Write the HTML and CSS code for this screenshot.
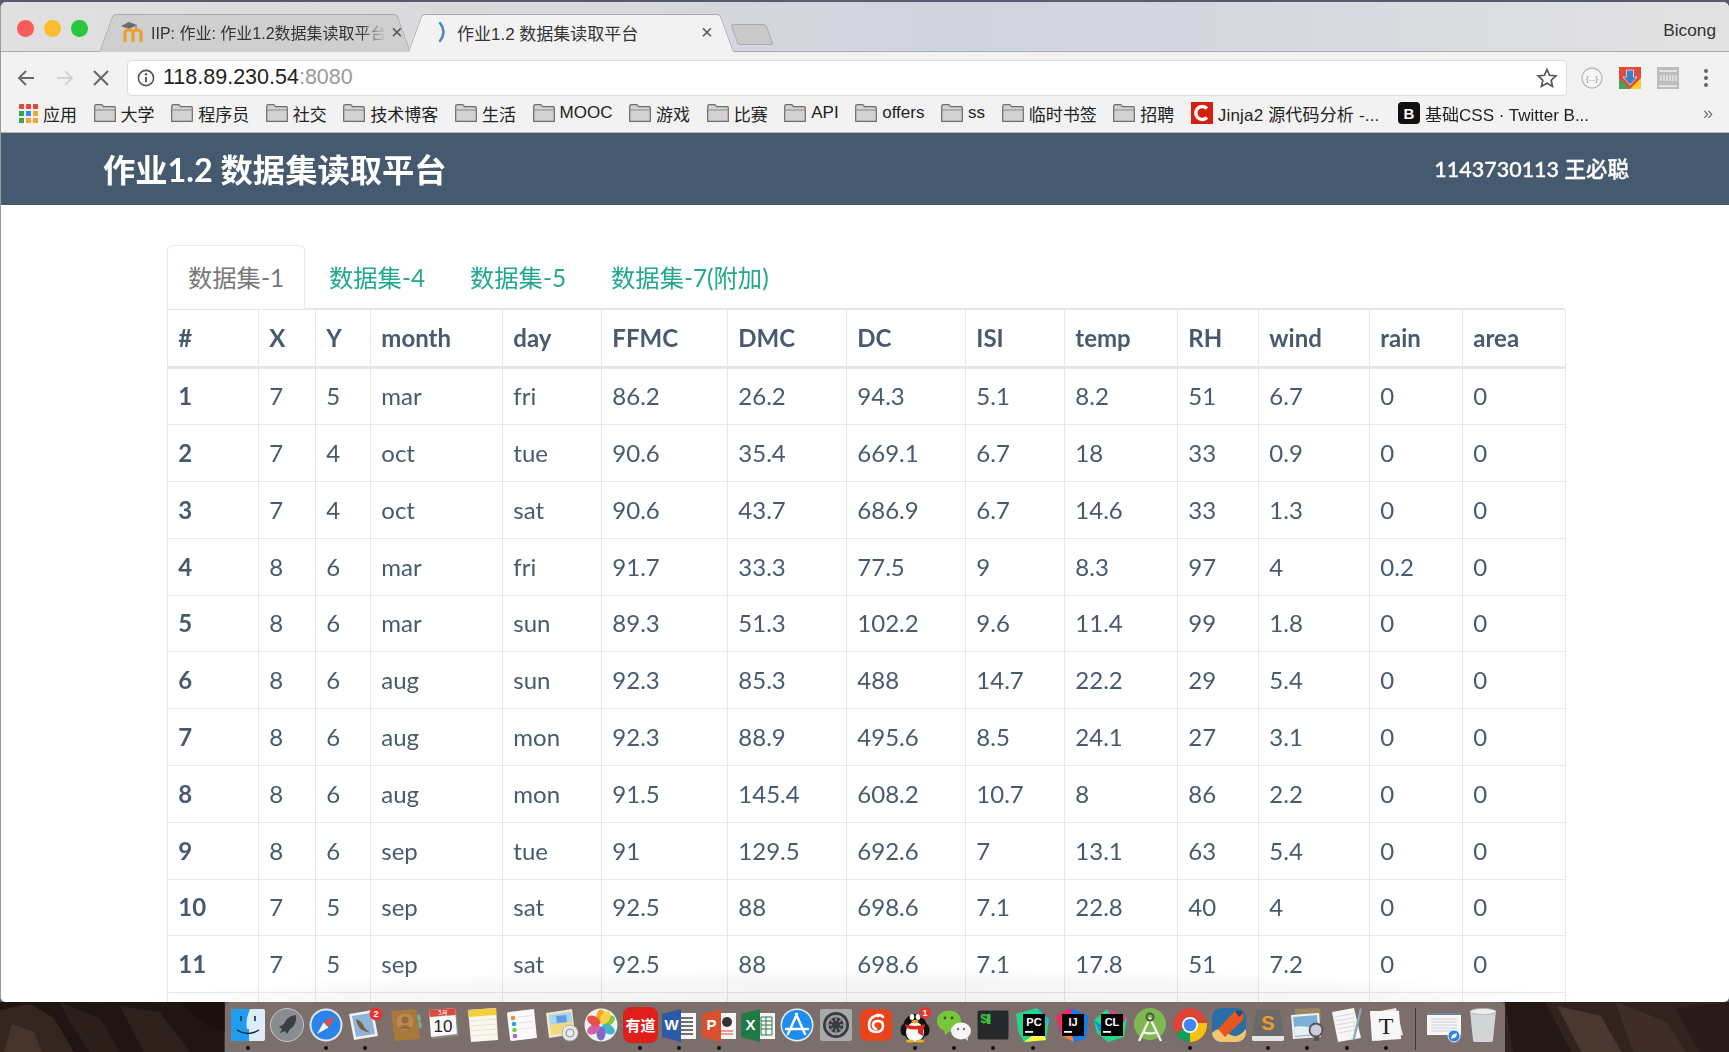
FILE: index.html
```html
<!DOCTYPE html>
<html lang="zh-CN">
<head>
<meta charset="utf-8">
<title>作业1.2 数据集读取平台</title>
<link rel="stylesheet" href="styles.css">
</head>
<body>
<div class="window">
  <div class="tabstrip">
    <div class="lights"><span class="light red"></span><span class="light yellow"></span><span class="light green"></span></div>
    <div class="tab inactive">
      <div class="tab-in">
        <svg class="fav" viewBox="0 0 24 22" width="24" height="22"><path d="M1 5l8-4 8 3-8 4z" fill="#6a6a6a"/><path d="M16 4v6" stroke="#6a6a6a" stroke-width="1"/><path d="M5 21V12q0-3 4-3t4 3v9M13 12q0-3 4-3t4 3v9" fill="none" stroke="#eda02e" stroke-width="3.200"/></svg>
        <span class="tab-title fade">IIP: 作业: 作业1.2数据集读取平台</span>
        <span class="tab-x">×</span>
      </div>
    </div>
    <div class="tab active">
      <div class="tab-in">
        <svg class="spin" viewBox="0 0 12 22" width="12" height="22"><path d="M3 2q7 9 0 18" fill="none" stroke="#3f83d6" stroke-width="2.400" stroke-linecap="round"/></svg>
        <span class="tab-title">作业1.2 数据集读取平台</span>
        <span class="tab-x">×</span>
      </div>
    </div>
    <div class="newtab"></div>
    <div class="profile">Bicong</div>
  </div>

  <div class="toolbar">
    <svg class="nav-ic" viewBox="0 0 20 20" width="20" height="20"><path d="M18 10H3M10 3l-7 7 7 7" fill="none" stroke="#666" stroke-width="1.900"/></svg>
    <svg class="nav-ic" viewBox="0 0 20 20" width="20" height="20"><path d="M2 10h15M10 3l7 7-7 7" fill="none" stroke="#d2d2d2" stroke-width="1.900"/></svg>
    <svg class="nav-ic stop" viewBox="0 0 20 20" width="20" height="20"><path d="M3 3l14 14M17 3L3 17" fill="none" stroke="#666" stroke-width="2"/></svg>
    <div class="omnibox">
      <svg viewBox="0 0 18 18" width="18" height="18"><circle cx="9" cy="9" r="7.600" fill="none" stroke="#555" stroke-width="1.600"/><path d="M9 8v5.200" stroke="#555" stroke-width="1.900"/><circle cx="9" cy="5.200" r="1.200" fill="#555"/></svg>
      <span class="url">118.89.230.54<span class="port">:8080</span></span>
      <svg class="star" viewBox="0 0 22 22" width="22" height="22"><path d="M11 2.500l2.600 5.800 6.300.7-4.700 4.200 1.300 6.200-5.500-3.200-5.500 3.200 1.300-6.200L2.100 9l6.300-.7z" fill="none" stroke="#555" stroke-width="1.700"/></svg>
    </div>
    <div class="exts">
      <svg viewBox="0 0 24 24" width="24" height="24"><circle cx="12" cy="12" r="10" fill="#f6f6f6" stroke="#bbb" stroke-width="1.300"/><text x="12" y="15" class="ext-t">{...}</text></svg>
      <svg viewBox="0 0 24 24" width="24" height="24"><rect x="1" y="1" width="22" height="22" fill="#e5483c"/><path d="M1 12l11 11H1z" fill="#43a656"/><path d="M23 12L12 23h11z" fill="#f8cf2c"/><path d="M8.500 4h7v7h3.500l-7 8-7-8h3.500z" fill="#3d7fc4" stroke="#dce6f2" stroke-width=".8"/></svg>
      <svg viewBox="0 0 24 24" width="24" height="24"><rect x="1" y="1" width="22" height="22" fill="#bdbdbd"/><path d="M3 5h18M3 20h18" stroke="#eee" stroke-width="1.400"/><path d="M5 9v6M8 9v6M11 9v6M14 9v6M17 9v6M20 9v6" stroke="#f0f0f0" stroke-width="1.200"/></svg>
      <svg viewBox="0 0 24 24" width="24" height="24"><circle cx="12" cy="5" r="2" fill="#666"/><circle cx="12" cy="12" r="2" fill="#666"/><circle cx="12" cy="19" r="2" fill="#666"/></svg>
    </div>
  </div>

  <div class="bookmarks">
    <div class="bm">
      <svg viewBox="0 0 19 19" width="19" height="19"><g><rect x="0" y="0" width="5" height="5" fill="#e04a3f"/><rect x="7" y="0" width="5" height="5" fill="#e04a3f"/><rect x="14" y="0" width="5" height="5" fill="#e04a3f"/><rect x="0" y="7" width="5" height="5" fill="#34a853"/><rect x="7" y="7" width="5" height="5" fill="#4285f4"/><rect x="14" y="7" width="5" height="5" fill="#f0a830"/><rect x="0" y="14" width="5" height="5" fill="#34a853"/><rect x="7" y="14" width="5" height="5" fill="#f0a830"/><rect x="14" y="14" width="5" height="5" fill="#f0a830"/></g></svg>
      <span>应用</span>
    </div>
    <div class="bm"><svg class="folder"><use href="#folder"/></svg><span>大学</span></div>
    <div class="bm"><svg class="folder"><use href="#folder"/></svg><span>程序员</span></div>
    <div class="bm"><svg class="folder"><use href="#folder"/></svg><span>社交</span></div>
    <div class="bm"><svg class="folder"><use href="#folder"/></svg><span>技术博客</span></div>
    <div class="bm"><svg class="folder"><use href="#folder"/></svg><span>生活</span></div>
    <div class="bm"><svg class="folder"><use href="#folder"/></svg><span>MOOC</span></div>
    <div class="bm"><svg class="folder"><use href="#folder"/></svg><span>游戏</span></div>
    <div class="bm"><svg class="folder"><use href="#folder"/></svg><span>比赛</span></div>
    <div class="bm"><svg class="folder"><use href="#folder"/></svg><span>API</span></div>
    <div class="bm"><svg class="folder"><use href="#folder"/></svg><span>offers</span></div>
    <div class="bm"><svg class="folder"><use href="#folder"/></svg><span>ss</span></div>
    <div class="bm"><svg class="folder"><use href="#folder"/></svg><span>临时书签</span></div>
    <div class="bm"><svg class="folder"><use href="#folder"/></svg><span>招聘</span></div>
    <div class="bm bm-jinja"><svg viewBox="0 0 22 22" width="22" height="22"><rect width="22" height="22" fill="#d3200f"/><path d="M16 6.500A6.500 6.500 0 1 0 16 15.500" fill="none" stroke="#fff" stroke-width="3.400"/></svg><span>Jinja2 源代码分析 -...</span></div>
    <div class="bm bm-css"><svg viewBox="0 0 22 22" width="22" height="22"><rect width="22" height="22" rx="4" fill="#111"/><text x="11" y="16.500" class="bm-b">B</text></svg><span>基础CSS · Twitter B...</span></div>
    <div class="more">»</div>
    <svg class="defs"><defs><g id="folder"><path d="M.7 18.300V3.200q0-1.500 1.500-1.500h5q1 0 1.500 1l.8 1h10.800q1 0 1 1v13.600z" fill="#d2d2d2" stroke="#6c6c6c" stroke-width="1.200"/><path d="M1 7h20" stroke="#8a8a8a" stroke-width="1"/></g></defs></svg>
  </div>

  <header class="site-head">
    <div class="site-title">作业1.2 数据集读取平台</div>
    <div class="site-user">1143730113 王必聪</div>
  </header>

  <main class="page">
    <ul class="nav-tabs">
      <li class="nt current">数据集-1</li>
      <li class="nt">数据集-4</li>
      <li class="nt">数据集-5</li>
      <li class="nt">数据集-7(附加)</li>
    </ul>
    <table class="data">
      <colgroup><col class="c1"><col class="c2"><col class="c3"><col class="c4"><col class="c5"><col class="c6"><col class="c7"><col class="c8"><col class="c9"><col class="c10"><col class="c11"><col class="c12"><col class="c13"><col class="c14"></colgroup>
      <thead><tr><th>#</th><th>X</th><th>Y</th><th>month</th><th>day</th><th>FFMC</th><th>DMC</th><th>DC</th><th>ISI</th><th>temp</th><th>RH</th><th>wind</th><th>rain</th><th>area</th></tr></thead>
      <tbody>
        <tr><th>1</th><td>7</td><td>5</td><td>mar</td><td>fri</td><td>86.2</td><td>26.2</td><td>94.3</td><td>5.1</td><td>8.2</td><td>51</td><td>6.7</td><td>0</td><td>0</td></tr>
        <tr><th>2</th><td>7</td><td>4</td><td>oct</td><td>tue</td><td>90.6</td><td>35.4</td><td>669.1</td><td>6.7</td><td>18</td><td>33</td><td>0.9</td><td>0</td><td>0</td></tr>
        <tr><th>3</th><td>7</td><td>4</td><td>oct</td><td>sat</td><td>90.6</td><td>43.7</td><td>686.9</td><td>6.7</td><td>14.6</td><td>33</td><td>1.3</td><td>0</td><td>0</td></tr>
        <tr><th>4</th><td>8</td><td>6</td><td>mar</td><td>fri</td><td>91.7</td><td>33.3</td><td>77.5</td><td>9</td><td>8.3</td><td>97</td><td>4</td><td>0.2</td><td>0</td></tr>
        <tr><th>5</th><td>8</td><td>6</td><td>mar</td><td>sun</td><td>89.3</td><td>51.3</td><td>102.2</td><td>9.6</td><td>11.4</td><td>99</td><td>1.8</td><td>0</td><td>0</td></tr>
        <tr><th>6</th><td>8</td><td>6</td><td>aug</td><td>sun</td><td>92.3</td><td>85.3</td><td>488</td><td>14.7</td><td>22.2</td><td>29</td><td>5.4</td><td>0</td><td>0</td></tr>
        <tr><th>7</th><td>8</td><td>6</td><td>aug</td><td>mon</td><td>92.3</td><td>88.9</td><td>495.6</td><td>8.5</td><td>24.1</td><td>27</td><td>3.1</td><td>0</td><td>0</td></tr>
        <tr><th>8</th><td>8</td><td>6</td><td>aug</td><td>mon</td><td>91.5</td><td>145.4</td><td>608.2</td><td>10.7</td><td>8</td><td>86</td><td>2.2</td><td>0</td><td>0</td></tr>
        <tr><th>9</th><td>8</td><td>6</td><td>sep</td><td>tue</td><td>91</td><td>129.5</td><td>692.6</td><td>7</td><td>13.1</td><td>63</td><td>5.4</td><td>0</td><td>0</td></tr>
        <tr><th>10</th><td>7</td><td>5</td><td>sep</td><td>sat</td><td>92.5</td><td>88</td><td>698.6</td><td>7.1</td><td>22.8</td><td>40</td><td>4</td><td>0</td><td>0</td></tr>
        <tr><th>11</th><td>7</td><td>5</td><td>sep</td><td>sat</td><td>92.5</td><td>88</td><td>698.6</td><td>7.1</td><td>17.8</td><td>51</td><td>7.2</td><td>0</td><td>0</td></tr>
        <tr><th></th><td></td><td></td><td></td><td></td><td></td><td></td><td></td><td></td><td></td><td></td><td></td><td></td><td></td></tr>
      </tbody>
    </table>
    <div class="dock-shade"></div>
  </main>
</div>

<div class="desktop">
  <svg class="wall" viewBox="0 0 225 50" preserveAspectRatio="none"><rect width="225" height="50" fill="#201512"/><path d="M0 8l30-6 24 14 20 34H0z" fill="#34251f"/><path d="M60 0l40 16 20 34H90L70 20z" fill="#2c1e19"/><path d="M120 4l40 6 30 40h-46z" fill="#2e201b"/><path d="M180 0h45v30l-20-8z" fill="#1a110e"/><path d="M12 22l22 8 8 20H4z" fill="#463329"/></svg>
  <nav class="dock">
    <div class="di"><svg viewBox="0 0 36 36"><rect x="1" y="2" width="34" height="32" rx="2" fill="#dfeafa"/><path d="M3 2h17q-5 12-3 20h2v12H3a2 2 0 0 1-2-2V4a2 2 0 0 1 2-2z" fill="#1f9df0"/><path d="M11 9v5M25 9v5" stroke="#134" stroke-width="1.600"/><path d="M7 23q11 7 22 0" fill="none" stroke="#123" stroke-width="1.400"/></svg><i class="run"></i></div>
    <div class="di"><svg viewBox="0 0 36 36"><circle cx="18" cy="18" r="16.500" fill="#8a8d90"/><circle cx="18" cy="18" r="16.500" fill="none" stroke="#c4c6c8" stroke-width="1"/><path d="M27 8q-9 1-12 9l-5 3 3 2-2 4 5-2 2 3 3-5q7-4 6-14z" fill="#3c3e42"/></svg></div>
    <div class="di"><svg viewBox="0 0 36 36"><circle cx="18" cy="18" r="16.500" fill="#dfe6f0"/><circle cx="18" cy="18" r="14.500" fill="#2a83e6"/><path d="M27 9L15.500 15.500 20.500 20.500z" fill="#ef4a3c"/><path d="M9 27l6.500-11.500 5 5z" fill="#f4f4f4"/></svg><i class="run"></i></div>
    <div class="di"><svg viewBox="0 0 36 36"><path d="M2 7l24-4 5 26-24 4z" fill="#f2f2f0"/><path d="M5 9l19-3 4 21-19 3z" fill="#8db5da"/><path d="M9 12q6 2 8 8l6 6-8-3q-5-4-6-11z" fill="#7a5c3c"/><circle cx="29" cy="7" r="6.500" fill="#e8332e"/><text x="29" y="10" class="badge-t">2</text></svg><i class="run"></i></div>
    <div class="di"><svg viewBox="0 0 36 36"><path d="M4 4l25-2 4 30-25 2z" fill="#a9793c"/><path d="M30 8l3-.5 1 6-3 .5zM31 15l3-.5 1 6-3 .5z" fill="#6bb59a"/><circle cx="18" cy="15" r="8.500" fill="#b98a4e"/><circle cx="18" cy="13" r="3.500" fill="#96693a"/><path d="M12 21q6-6 12 0v1H12z" fill="#96693a"/></svg></div>
    <div class="di"><svg viewBox="0 0 36 36"><path d="M3 4l27-2 3 27-27 3z" fill="#888"/><path d="M3 3l26-2 2 26-26 3z" fill="#fafafa"/><path d="M3 3l26-2 .7 7L3.700 10z" fill="#da4a3f"/><text x="17" y="8" class="cal-m">5月</text><text x="17" y="25" class="cal-d">10</text></svg></div>
    <div class="di"><svg viewBox="0 0 36 36"><path d="M3 3l28-2 2 32-27 2z" fill="#faf8ee"/><path d="M3 3l28-2 .4 7L3.400 10z" fill="#f5cd3d"/><path d="M4 14l28-2M4.300 19l28-2M4.600 24l28-2M5 29l28-2" stroke="#dedbcc" stroke-width=".7"/></svg></div>
    <div class="di"><svg viewBox="0 0 36 36"><path d="M5 5l25-3 3 29-25 3q-2 0-2-2L3 7q0-2 2-2z" fill="#fafafa"/><circle cx="9" cy="11" r="2.300" fill="#f08a2c"/><circle cx="10" cy="17" r="2.300" fill="#2f9cf0"/><circle cx="10.500" cy="23" r="2.300" fill="#6cd13e"/><circle cx="11" cy="29" r="2.300" fill="#b760d8"/><path d="M14 10l14-1.500M15 16l14-1.500M15.500 22l14-1.500" stroke="#ddd" stroke-width=".8"/></svg></div>
    <div class="di"><svg viewBox="0 0 36 36"><path d="M2 6l26-4 3 25-26 4z" fill="#eee6c6"/><path d="M5 8l22-3 1.500 10L6 18z" fill="#a9d4ee"/><path d="M6 18l22-3 2 10-23 3z" fill="#f2d97c"/><path d="M12 9l10-1 1 7-10 1z" fill="#5f9be0"/><circle cx="26" cy="26" r="8" fill="#e6e8ea" stroke="#aaa" stroke-width=".8"/><circle cx="26" cy="26" r="4" fill="none" stroke="#8d9298" stroke-width="1"/></svg></div>
    <div class="di"><svg viewBox="0 0 36 36"><circle cx="18" cy="18" r="16.500" fill="#f0f0f0"/><g transform="translate(18 18)"><ellipse cx="0" cy="-8.500" rx="4.500" ry="7" fill="#f5a623"/><ellipse cx="0" cy="-8.500" rx="4.500" ry="7" fill="#86c33e" transform="rotate(60)"/><ellipse cx="0" cy="-8.500" rx="4.500" ry="7" fill="#42b5c8" transform="rotate(120)"/><ellipse cx="0" cy="-8.500" rx="4.500" ry="7" fill="#7a6bc8" transform="rotate(180)"/><ellipse cx="0" cy="-8.500" rx="4.500" ry="7" fill="#d65aa6" transform="rotate(240)"/><ellipse cx="0" cy="-8.500" rx="4.500" ry="7" fill="#e8503f" transform="rotate(300)"/><ellipse cx="0" cy="-8.500" rx="4.500" ry="7" fill="#f7d148" transform="rotate(30)"/></g></svg></div>
    <div class="di"><svg viewBox="0 0 36 36"><rect x="1" y="0" width="35" height="36" rx="8" fill="#e01f1b"/><text x="18.500" y="24" class="yd">有道</text></svg><i class="run"></i></div>
    <div class="di"><svg viewBox="0 0 36 36"><rect x="16" y="6" width="19" height="26" fill="#f6f6f6"/><path d="M20 11h12M20 15h12M20 19h12M20 23h12M20 27h12" stroke="#444" stroke-width="1.300"/><path d="M1 7L20 2v33L1 30z" fill="#2c5aa6"/><text x="10.500" y="23" class="off">W</text></svg><i class="run"></i></div>
    <div class="di"><svg viewBox="0 0 36 36"><rect x="16" y="6" width="19" height="26" fill="#f6f6f6"/><circle cx="26" cy="15" r="5" fill="#333"/><path d="M20 24h12M20 27h12" stroke="#d8472b" stroke-width="1.200"/><path d="M1 7L20 2v33L1 30z" fill="#d8512c"/><text x="10.500" y="23" class="off">P</text></svg><i class="run"></i></div>
    <div class="di"><svg viewBox="0 0 36 36"><rect x="16" y="6" width="19" height="26" fill="#f6f6f6"/><path d="M21 10h11v18H21zM21 14h11M21 18h11M21 22h11M26 10v18" fill="none" stroke="#2b7a4b" stroke-width="1"/><path d="M1 7L20 2v33L1 30z" fill="#1f7a48"/><text x="10.500" y="23" class="off">X</text></svg></div>
    <div class="di"><svg viewBox="0 0 36 36"><circle cx="18" cy="18" r="16.500" fill="#e6eef8"/><circle cx="18" cy="18" r="15" fill="#1f8cf0"/><path d="M18 7L9 27M17 7l9 20M7 22h22" fill="none" stroke="#fff" stroke-width="2.400" stroke-linecap="round"/></svg></div>
    <div class="di"><svg viewBox="0 0 36 36"><rect x="2" y="2" width="32" height="32" rx="2" fill="#a7a9ab"/><circle cx="18" cy="18" r="13" fill="#3a3b3c"/><circle cx="18" cy="18" r="9" fill="none" stroke="#a0a2a4" stroke-width="2.500"/><path d="M18 8v20M8 18h20M11 11l14 14M25 11L11 25" stroke="#8a8c8e" stroke-width="1.500"/><circle cx="18" cy="18" r="4" fill="#3a3b3c"/></svg></div>
    <div class="di"><svg viewBox="0 0 36 36"><rect x="2" y="2" width="32" height="32" rx="7" fill="#e8431b"/><path d="M20 8q-9 2-9 10 0 7 7 7t7-6q0-5-5-5t-5 4q0 3 3 4M20 9q2-2 5 1" fill="none" stroke="#fff" stroke-width="2.600" stroke-linecap="round"/></svg></div>
    <div class="di"><svg viewBox="0 0 36 36"><ellipse cx="7" cy="23" rx="3.500" ry="6" fill="#111"/><ellipse cx="29" cy="23" rx="3.500" ry="6" fill="#111"/><ellipse cx="18" cy="21" rx="12" ry="14" fill="#111"/><ellipse cx="18" cy="25" rx="9" ry="10" fill="#fafafa"/><ellipse cx="15" cy="10" rx="2.300" ry="3" fill="#fff"/><ellipse cx="21" cy="10" rx="2.300" ry="3" fill="#fff"/><path d="M14 14q4-2 8 0l-4 3z" fill="#f0b020"/><path d="M8 17q10 4 20 0l-1 4q-9 3-18 0z" fill="#d9281c"/><path d="M21 20l5 0 0 9-5-3z" fill="#d9281c"/><ellipse cx="13" cy="34" rx="4" ry="1.500" fill="#f0b020"/><ellipse cx="23" cy="34" rx="4" ry="1.500" fill="#f0b020"/><circle cx="28" cy="6" r="6" fill="#e8332e"/><text x="28" y="9" class="badge-t">1</text></svg><i class="run"></i></div>
    <div class="di"><svg viewBox="0 0 36 36"><ellipse cx="13" cy="14" rx="12" ry="10.500" fill="#79c63a"/><path d="M8 22l1 6 6-5z" fill="#79c63a"/><circle cx="9" cy="11" r="1.400" fill="#2b5a12"/><circle cx="16" cy="11" r="1.400" fill="#2b5a12"/><ellipse cx="25" cy="24" rx="10" ry="8.500" fill="#f6f6f6"/><path d="M29 31l3 3-1-6z" fill="#f6f6f6"/><circle cx="22" cy="22" r="1.200" fill="#777"/><circle cx="28" cy="22" r="1.200" fill="#777"/></svg><i class="run"></i></div>
    <div class="di"><svg viewBox="0 0 36 36"><rect x="2" y="3" width="32" height="30" rx="2" fill="#262829" stroke="#777" stroke-width="1"/><text x="5" y="16" class="term">$</text><rect x="12" y="7" width="3.500" height="10" fill="#3bc23b"/></svg><i class="run"></i></div>
    <div class="di"><svg viewBox="0 0 36 36"><path d="M1 7L22 1l12 12-3 20-22 2L3 24z" fill="#21d789"/><path d="M22 1l12 12-4 4z" fill="#07c3f2"/><path d="M9 35l22-2-4-12z" fill="#fcf84a"/><rect x="8" y="7" width="22" height="22" fill="#000"/><text x="19" y="19" class="jb">PC</text><rect x="10" y="24" width="8" height="1.800" fill="#fff"/></svg><i class="run"></i></div>
    <div class="di"><svg viewBox="0 0 36 36"><path d="M2 9L16 1l18 8-2 22-12 4L6 28z" fill="#087cfa"/><path d="M2 9L16 1l5 14L7 28z" fill="#fe2857"/><path d="M6 28l14 7-4-16z" fill="#fc801d"/><rect x="8" y="7" width="22" height="22" fill="#000"/><text x="19" y="19" class="jb">IJ</text><rect x="10" y="24" width="8" height="1.800" fill="#fff"/></svg></div>
    <div class="di"><svg viewBox="0 0 36 36"><path d="M1 13L14 2l20 8-3 20-16 5L4 26z" fill="#21d789"/><path d="M14 2l20 8-8 12z" fill="#ed358c"/><path d="M1 13l8 16 10-4z" fill="#009ae5"/><rect x="8" y="7" width="22" height="22" fill="#000"/><text x="19" y="19" class="jb">CL</text><rect x="10" y="24" width="8" height="1.800" fill="#fff"/></svg></div>
    <div class="di"><svg viewBox="0 0 36 36"><circle cx="18" cy="17" r="16" fill="#7fb850"/><path d="M18 11L7 34M18 11l11 23M11 25q7 3 14 0" fill="none" stroke="#f2f2f2" stroke-width="2.300"/><circle cx="18" cy="10" r="3.500" fill="none" stroke="#4a5c3a" stroke-width="2"/></svg></div>
    <div class="di"><svg viewBox="0 0 36 36"><circle cx="18" cy="18" r="17" fill="#db4437"/><path d="M18 18L3.300 26.500A17 17 0 0 0 18 35z" fill="#0f9d58"/><path d="M18 18V35A17 17 0 0 0 35 18V16H18z" fill="#f4c20d"/><circle cx="18" cy="18" r="8" fill="#fff"/><circle cx="18" cy="18" r="6.300" fill="#4285f4"/></svg><i class="run"></i></div>
    <div class="di"><svg viewBox="0 0 36 36"><rect x="1" y="1" width="34" height="34" rx="9" fill="#2a6ea8"/><path d="M1 26q8-8 16 0t18-4v4a9 9 0 0 1-9 9H10a9 9 0 0 1-9-9z" fill="#f0c770"/><path d="M7 22L24 4q5-2 8 2 2 4-1 8L14 30z" fill="#e8561f"/><path d="M24 4q5-2 8 2l-4 4z" fill="#244a70"/></svg></div>
    <div class="di"><svg viewBox="0 0 36 36"><path d="M6 3h24l4 26H2z" fill="#6a6a6a"/><path d="M2 29h32v3q0 2-2 2H4q-2 0-2-2z" fill="#e6e6e6"/><text x="18" y="23" class="subl">S</text></svg><i class="run"></i></div>
    <div class="di"><svg viewBox="0 0 36 36"><path d="M6 2l25-1 1 12H6z" fill="#a08660"/><path d="M2 8l28-2 2 24-28 2z" fill="#f2f2f2"/><path d="M4 10l24-2 1.500 20L6 30z" fill="#7cb0d8"/><path d="M5 20q10-2 24 2v5L6 29z" fill="#e8eef2"/><circle cx="27" cy="23" r="6.500" fill="#ccd" stroke="#555" stroke-width="1.800"/><path d="M25 29v5h5v-5" fill="#555"/></svg><i class="run"></i></div>
    <div class="di"><svg viewBox="0 0 36 36"><path d="M3 5l22-4 7 30-23 4z" fill="#f6f6f6"/><path d="M5 10l20-3.500M6 14l20-3.500M7 18l20-3.500M8 22l20-3.500M9 26l20-3.500" stroke="#ccc" stroke-width=".7"/><path d="M31 1l2 1-7 30-2 2-.3-3z" fill="#8ca8bd"/></svg><i class="run"></i></div>
    <div class="di"><svg viewBox="0 0 36 36"><path d="M2 6l26-5 7 27-26 6z" fill="#e6e6e6"/><path d="M2 4l29 0 2 28-29 2z" fill="#f7f7f7"/><text x="18" y="27" class="ty">T</text></svg><i class="run"></i></div>
    <div class="sep"></div>
    <div class="di"><svg viewBox="0 0 36 36"><rect x="1" y="6" width="34" height="22" fill="#f6f6f6"/><rect x="1" y="6" width="34" height="2" fill="#6d8296"/><path d="M5 12h26M5 15h26M5 18h26M5 21h26M5 24h26" stroke="#c8ccd0" stroke-width=".9"/><circle cx="28" cy="29" r="6" fill="#2a83e6" stroke="#eee"/><path d="M31 26l-5 2-1 4 5-2z" fill="#fff"/></svg></div>
    <div class="di"><svg viewBox="0 0 36 36"><path d="M5 4h26l-3 29q0 2-3 2H11q-3 0-3-2z" fill="#d2d4d6"/><ellipse cx="18" cy="4.500" rx="13" ry="3" fill="#eceeef" stroke="#b0b2b4" stroke-width=".8"/></svg></div>
  </nav>
  <svg class="wall" viewBox="0 0 224 50" preserveAspectRatio="none"><rect width="224" height="50" fill="#33231e"/><path d="M0 0h40l26 50H8z" fill="#241814"/><path d="M52 4l44 10 20 36H76z" fill="#4a3830"/><path d="M110 0l52 20 18 30h-52z" fill="#3f2e27"/><path d="M170 6l54-6v50h-30z" fill="#291c18"/></svg>
</div>
</body>
</html>
```

FILE: styles.css
```css
* { box-sizing: border-box; }
html, body { margin: 0; padding: 0; }
body {
  width: 1729px;
  height: 1052px;
  overflow: hidden;
  background: #5a5a6e;
  display: flex;
  flex-direction: column;
  font-family: "Liberation Sans", "Noto Sans CJK SC", sans-serif;
}

.window {
  margin-top: 2px;
  height: 1000px;
  flex: none;
  display: flex;
  flex-direction: column;
  background: #fff;
  border-radius: 6px 6px 5px 5px;
  border-left: 1px solid #9a9a9a;
  overflow: hidden;
  filter: blur(.4px);
  position: relative;
}

/* tab strip */
.tabstrip {
  height: 50px;
  flex: none;
  display: flex;
  align-items: flex-end;
  background: linear-gradient(90deg, #e0e0e0 0, #d8d8dc 35%, #d1d5e0 55%, #d4d7df 70%, #e2e2e2 100%);
  border-bottom: 1px solid #a9a9a9;
}
.lights {
  width: 98px;
  align-self: flex-start;
  display: flex;
  gap: 10.500px;
  padding: 18px 0 0 16px;
}
.light { width: 16.500px; height: 16.500px; border-radius: 50%; }
.red { background: #fc5b57; }
.yellow { background: #fdbc2e; }
.green { background: #28c83e; }

.tab { position: relative; height: 38px; margin-bottom: -1px; }
.tab::before, .tab::after {
  content: "";
  position: absolute;
  top: 0;
  bottom: 0;
  width: 50%;
  border-top: 1px solid #aaa;
}
.tab::before {
  left: 0;
  transform-origin: bottom left;
  transform: skewX(-20deg);
  border-left: 1px solid #aaa;
  border-top-left-radius: 4px;
}
.tab::after {
  right: 0;
  transform-origin: bottom right;
  transform: skewX(20deg);
  border-right: 1px solid #aaa;
  border-top-right-radius: 4px;
}
.inactive { width: 312px; }
.inactive::before, .inactive::after { background: #cfcfcf; }
.active { width: 325px; margin-left: -3px; z-index: 1; }
.active::before, .active::after { background: #f2f2f2; }
.tab-in {
  position: relative;
  z-index: 1;
  height: 100%;
  display: flex;
  align-items: center;
  font-size: 17px;
  color: #333;
  padding-bottom: 2px;
}
.inactive .tab-in { padding-left: 21px; font-size: 16px; }
.active .tab-in { padding-left: 29px; }
.fav { flex: none; margin-right: 7px; }
.spin { flex: none; margin-right: 8px; }
.tab-title { white-space: nowrap; overflow: hidden; }
.inactive .tab-title { width: 236px; }
.active .tab-title { width: 240px; }
.fade { -webkit-mask-image: linear-gradient(90deg, #000 88%, transparent); mask-image: linear-gradient(90deg, #000 88%, transparent); }
.tab-x { font-size: 20px; color: #555; margin-left: 4px; }
.newtab {
  width: 36px;
  height: 21px;
  margin: 0 0 6px 1px;
  align-self: flex-end;
  background: #c9c9c9;
  border: 1px solid #ababab;
  border-radius: 3px;
  transform: skewX(20deg);
}
.profile { margin: 0 13px 0 auto; align-self: flex-start; padding-top: 18px; font-size: 17.300px; color: #333; }

/* toolbar */
.toolbar {
  height: 44px;
  flex: none;
  background: #f2f2f2;
  display: flex;
  align-items: center;
  padding: 7px 0 0 15px;
  gap: 19px;
}
.nav-ic { flex: none; }
.stop { margin-left: -3px; }
.omnibox {
  flex: 1;
  height: 36px;
  margin-left: -3px;
  background: #fff;
  border: 1px solid #dcdcdc;
  border-radius: 4px;
  display: flex;
  align-items: center;
  padding: 0 8px 0 9px;
  gap: 8px;
}
.url { font-size: 21.500px; color: #222; flex: 1; }
.port { color: #9a9a9a; }
.star { flex: none; }
.exts { flex: none; width: 149px; margin-left: -6px; display: flex; gap: 14px; padding-right: 11px; }
.ext-t { font-size: 8px; fill: #888; text-anchor: middle; }

/* bookmarks */
.bookmarks {
  height: 37px;
  flex: none;
  background: #f2f2f2;
  border-bottom: 1px solid #b5b5b5;
  display: flex;
  align-items: center;
  padding: 0 0 2px 18px;
  gap: 16.600px;
  font-size: 17px;
  color: #222;
}
.bm { display: flex; align-items: center; gap: 5px; white-space: nowrap; flex: none; }
.bm-jinja span { letter-spacing: .17px; }
.bm-css { margin-left: 2px; }
.folder { width: 22px; height: 20px; }
.bm-b { font-size: 15px; font-weight: bold; fill: #fff; text-anchor: middle; }
.more { margin-left: auto; margin-right: 16px; font-size: 18px; color: #777; }
.defs { width: 0; height: 0; position: absolute; }

/* page */
.site-head {
  height: 72px;
  flex: none;
  background: #465a6f;
  display: flex;
  align-items: center;
  justify-content: space-between;
  padding: 0 100px 3px 102px;
  color: #fff;
  font-family: Lato, "Noto Sans CJK SC", sans-serif;
}
.site-title { font-size: 32.300px; font-weight: 700; }
.site-user { font-size: 21.500px; font-weight: 500; -webkit-text-stroke: .3px #fff; }

.page {
  flex: 1;
  min-height: 0;
  overflow: hidden;
  position: relative;
  padding: 40px 0 0 166px;
  font-family: Lato, "Noto Sans CJK SC", sans-serif;
}
.nav-tabs {
  list-style: none;
  margin: 0;
  padding: 0;
  width: 1398px;
  height: 65px;
  display: flex;
  gap: 3px;
  border-bottom: 2px solid #e6e6e6;
  font-size: 24.300px;
}
.nt {
  height: 64px;
  padding: 0 20px;
  line-height: 63px;
  color: #1fa88d;
  border: 1px solid transparent;
}
.current {
  color: #777;
  background: #fff;
  border-color: #e8e8e8;
  border-bottom-color: #fff;
  border-radius: 6px 6px 0 0;
  position: relative;
}

.data {
  table-layout: fixed;
  border-collapse: collapse;
  width: 1398px;
  font-size: 24px;
  color: #475a70;
}
.c1 { width: 91px; } .c2 { width: 57px; } .c3 { width: 55px; } .c4 { width: 132px; }
.c5 { width: 99px; } .c6 { width: 126px; } .c7 { width: 119px; } .c8 { width: 119px; }
.c9 { width: 99px; } .c10 { width: 113px; } .c11 { width: 81px; } .c12 { width: 111px; }
.c13 { width: 93px; } .c14 { width: 103px; }
.data th, .data td {
  height: 57px;
  padding: 0 0 1px 10.300px;
  text-align: left;
  border: 1.500px solid #e8e8e8;
  white-space: nowrap;
}
.data tbody tr:nth-child(5n) th, .data tbody tr:nth-child(5n) td { height: 56px; }
.data th { font-weight: 700; }
.data thead th { border-top: 0; border-bottom: 3px solid #e6e6e6; height: 57px; }

.dock-shade {
  position: absolute;
  left: 130px;
  right: 130px;
  bottom: 0;
  height: 34px;
  background: radial-gradient(ellipse 50% 100% at 50% 100%, rgba(0,0,0,.05), rgba(0,0,0,.03) 70%, rgba(0,0,0,0));
}

/* desktop */
.desktop { flex: 1; min-height: 0; display: flex; }
.wall { flex: 1; height: 100%; display: block; }
.dock {
  width: 1280px;
  flex: none;
  background: #7c6f6b;
  border-radius: 6px 6px 0 0;
  display: flex;
  padding: 5px 0 0 3.500px;
}
.di { position: relative; width: 39.250px; flex: none; display: flex; justify-content: center; }
.di svg { width: 36px; height: 36px; display: block; }
.run { position: absolute; left: 50%; bottom: 2px; width: 4px; height: 4px; margin-left: -2px; border-radius: 50%; background: #111; }
.sep { width: 1px; flex: none; height: 42px; background: #3f3633; margin: 1px 9px 0 9px; }
.badge-t { font-size: 9px; fill: #fff; text-anchor: middle; font-family: "Liberation Sans", sans-serif; font-weight: bold; }
.cal-m { font-size: 6px; fill: #fff; text-anchor: middle; font-family: "Noto Sans CJK SC", sans-serif; }
.cal-d { font-size: 17px; fill: #222; text-anchor: middle; font-family: "Liberation Sans", sans-serif; }
.yd { font-size: 15px; fill: #fff; text-anchor: middle; font-family: "Noto Sans CJK SC", sans-serif; font-weight: 700; }
.off { font-size: 15px; fill: #fff; text-anchor: middle; font-family: "Liberation Sans", sans-serif; font-weight: bold; }
.term { font-size: 13px; fill: #3bc23b; font-family: "Liberation Mono", monospace; font-weight: bold; }
.jb { font-size: 11px; fill: #fff; text-anchor: middle; font-family: "Liberation Sans", sans-serif; font-weight: bold; }
.subl { font-size: 20px; fill: #f19a2c; text-anchor: middle; font-family: "Liberation Sans", sans-serif; font-weight: bold; }
.ty { font-size: 24px; fill: #222; text-anchor: middle; font-family: "Liberation Serif", serif; }
```
